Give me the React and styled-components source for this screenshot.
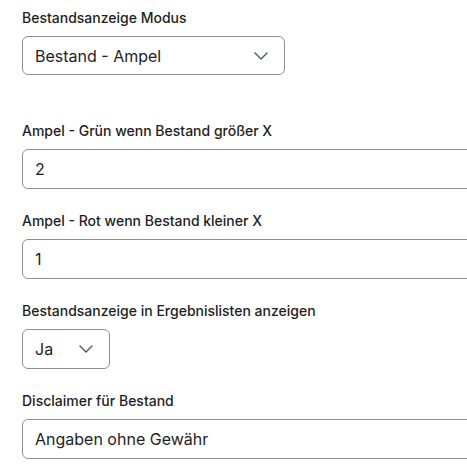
import React from 'react';
import styled, { createGlobalStyle } from 'styled-components';

const GlobalStyle = createGlobalStyle`
  html, body {
    margin: 0;
    padding: 0;
    background: #ffffff;
    overflow: hidden;
  }
  body {
    font-family: Inter, "Noto Sans", sans-serif;
    color: #1e1e1e;
  }
`;

const Page = styled.div`
  display: flex;
  flex-direction: column;
  padding: 8px 0 0 22px;
  width: 460px;
`;

const Field = styled.div`
  display: flex;
  flex-direction: column;
  margin-bottom: ${(p) => p.$gap || 22}px;
`;

const Label = styled.label`
  font-size: 14px;
  font-weight: 500;
  line-height: 20px;
  color: #1e1e1e;
  margin-bottom: 8px;
`;

const Box = styled.div`
  box-sizing: border-box;
  display: flex;
  align-items: center;
  justify-content: space-between;
  height: ${(p) => p.$h || 40}px;
  width: ${(p) => (p.$w ? `${p.$w}px` : '100%')};
  border: 1px solid #8c8f94;
  border-radius: 6px;
  padding: 0 16px 0 12px;
  font-size: 16px;
  color: #1e1e1e;
  background: #fff;
`;

const Chevron = () => (
  <svg width="14" height="8" viewBox="0 0 14 8" fill="none">
    <path d="M1 1l6 6 6-6" stroke="#50575e" strokeWidth="1.4" strokeLinecap="round" strokeLinejoin="round" />
  </svg>
);

const App = () => (
  <>
    <GlobalStyle />
    <Page>
      <Field $gap={46}>
        <Label>Bestandsanzeige Modus</Label>
        <Box $w={263} $h={39}>
          <span>Bestand - Ampel</span>
          <Chevron />
        </Box>
      </Field>
      <Field>
        <Label>Ampel - Grün wenn Bestand größer X</Label>
        <Box>2</Box>
      </Field>
      <Field>
        <Label>Ampel - Rot wenn Bestand kleiner X</Label>
        <Box>1</Box>
      </Field>
      <Field $gap={22}>
        <Label>Bestandsanzeige in Ergebnislisten anzeigen</Label>
        <Box $w={88}>
          <span>Ja</span>
          <Chevron />
        </Box>
      </Field>
      <Field>
        <Label>Disclaimer für Bestand</Label>
        <Box>Angaben ohne Gewähr</Box>
      </Field>
    </Page>
  </>
);

export default App;
